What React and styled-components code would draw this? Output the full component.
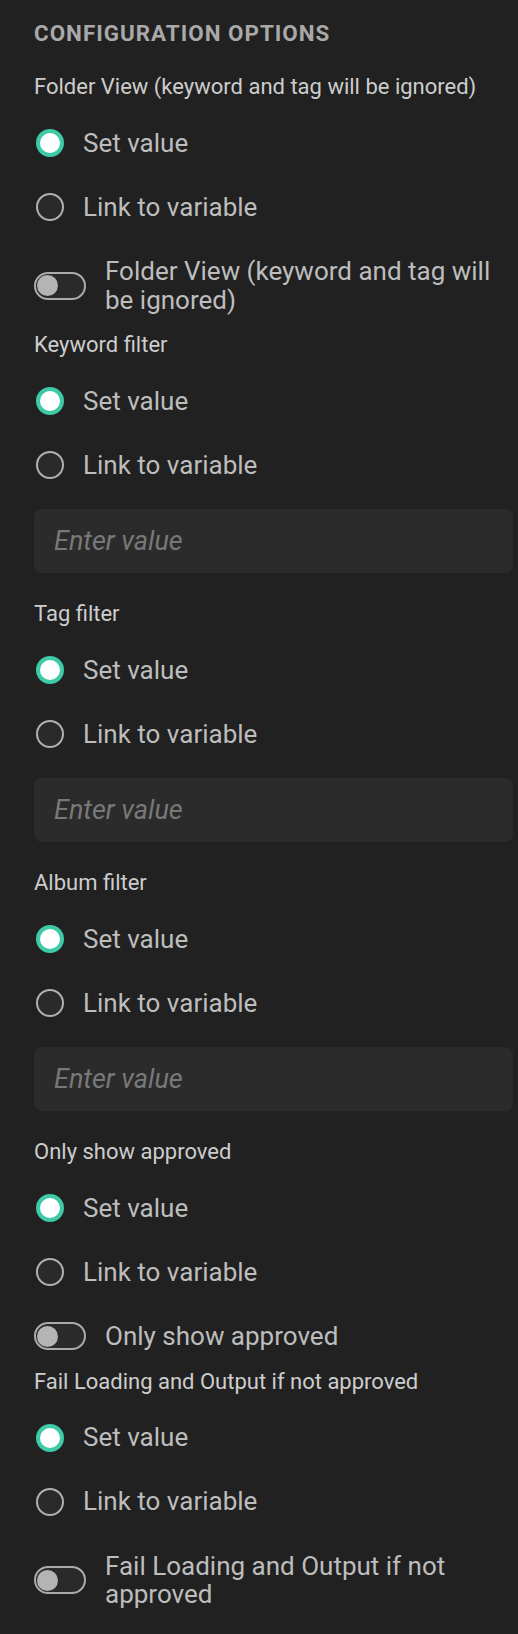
import React from 'react'
import styled, { createGlobalStyle } from 'styled-components'

const GlobalStyle = createGlobalStyle`
html, body {
    margin: 0;
    padding: 0;
    background: #212121;
}
body {
    font-family: Roboto, "Noto Sans", "Liberation Sans", sans-serif;
    -webkit-font-smoothing: antialiased;
}
`

const Panel = styled.div`
min-height: 1634px;
box-sizing: border-box;
padding: 16px 5px 20px 34px;
background: #212121;
`

const Title = styled.h2`
margin: 0 0 20px;
font-size: 22.4px;
line-height: 34px;
font-weight: 700;
letter-spacing: 1px;
text-transform: uppercase;
color: #a9a9a9;
`

const Section = styled.section`
display: flex;
flex-direction: column;
`

const Label = styled.div`
font-size: 22px;
line-height: 34px;
color: #cdcdcd;
margin-bottom: 7px;
`

const RadioRow = styled.label`
display: flex;
align-items: center;
height: 64px;
gap: 19px;
cursor: pointer;
`

const RadioDot = styled.span`
box-sizing: border-box;
width: 28px;
height: 28px;
margin-left: 2px;
border-radius: 50%;
flex-shrink: 0;
border: ${props => props.$checked ? '4px solid #3ec9a7' : '2px solid #b0b0b0'};
background: ${props => props.$checked ? '#ffffff' : '#2a2a2a'};
`

const OptionText = styled.span`
font-size: 26px;
line-height: 28.5px;
color: #bdbdbd;
`

const ToggleRow = styled.label`
display: flex;
align-items: center;
gap: 19px;
margin: 18px 0 14px;
cursor: pointer;
`

const Track = styled.span`
box-sizing: border-box;
flex-shrink: 0;
width: 52px;
height: 28px;
border-radius: 14px;
border: 2px solid #ababab;
background: #2a2a2a;
display: flex;
align-items: center;
padding-left: 1px;
`

const Knob = styled.span`
width: 21px;
height: 21px;
border-radius: 50%;
background: #b4b4b4;
`

const Input = styled.input`
box-sizing: border-box;
width: 100%;
height: 64px;
margin: 12px 0 24px;
padding: 0 20px;
border: none;
border-radius: 8px;
background: #2b2b2b;
color: #d0d0d0;
font-family: inherit;
font-size: 27px;
outline: none;

&::placeholder {
    color: #787878;
    font-style: italic;
}
`

const ValueChoice = () => (
    <>
        <RadioRow>
            <RadioDot $checked />
            <OptionText>Set value</OptionText>
        </RadioRow>
        <RadioRow>
            <RadioDot />
            <OptionText>Link to variable</OptionText>
        </RadioRow>
    </>
)

const Toggle = ({ text }) => (
    <ToggleRow>
        <Track>
            <Knob />
        </Track>
        <OptionText>{text}</OptionText>
    </ToggleRow>
)

const options = [
    { label: 'Folder View (keyword and tag will be ignored)', kind: 'toggle' },
    { label: 'Keyword filter', kind: 'text' },
    { label: 'Tag filter', kind: 'text' },
    { label: 'Album filter', kind: 'text' },
    { label: 'Only show approved', kind: 'toggle' },
    { label: 'Fail Loading and Output if not approved', kind: 'toggle' },
]

const App = () => {
    return (
        <Panel>
            <GlobalStyle />
            <Title>Configuration options</Title>
            {options.map(opt => (
                <Section key={opt.label}>
                    <Label>{opt.label}</Label>
                    <ValueChoice />
                    {opt.kind === 'toggle'
                        ? <Toggle text={opt.label} />
                        : <Input placeholder="Enter value" />}
                </Section>
            ))}
        </Panel>
    )
}

export default App
